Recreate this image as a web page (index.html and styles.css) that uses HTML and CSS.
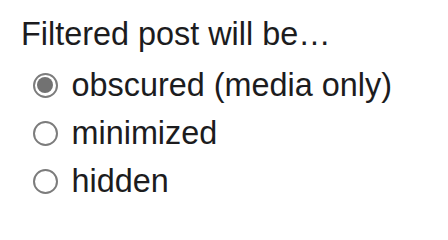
FILE: index.html
```html
<!DOCTYPE html>
<html>
<head>
<meta charset="utf-8">
<link rel="stylesheet" href="styles.css">
</head>
<body>
<fieldset class="group">
  <div class="title">Filtered post will be…</div>
  <label class="option"><input type="radio" name="f" class="radio" checked><span>obscured (media only)</span></label>
  <label class="option"><input type="radio" name="f" class="radio"><span>minimized</span></label>
  <label class="option"><input type="radio" name="f" class="radio"><span>hidden</span></label>
</fieldset>
</body>
</html>
```
FILE: styles.css
```css
html, body {
  margin: 0;
  padding: 0;
  background: #ffffff;
}
.group {
  margin: 0;
  border: 0;
  padding: 10px 0 0 21px;
  font-family: "Liberation Sans", Arial, sans-serif;
  font-size: 32.4px;
  line-height: 48px;
  color: #1c1c1e;
  display: flex;
  flex-direction: column;
}
.title {
  height: 51px;
}
.option {
  display: flex;
  align-items: center;
  height: 48px;
}
.radio {
  appearance: none;
  -webkit-appearance: none;
  margin: 0 14px 0 11.5px;
  width: 25px;
  height: 25px;
  border: 2.2px solid #7c7c7c;
  border-radius: 50%;
  box-sizing: border-box;
  display: grid;
  place-items: center;
  background: #fff;
}
.radio:checked::after {
  content: "";
  width: 16.5px;
  height: 16.5px;
  border-radius: 50%;
  background: #727272;
}
```
